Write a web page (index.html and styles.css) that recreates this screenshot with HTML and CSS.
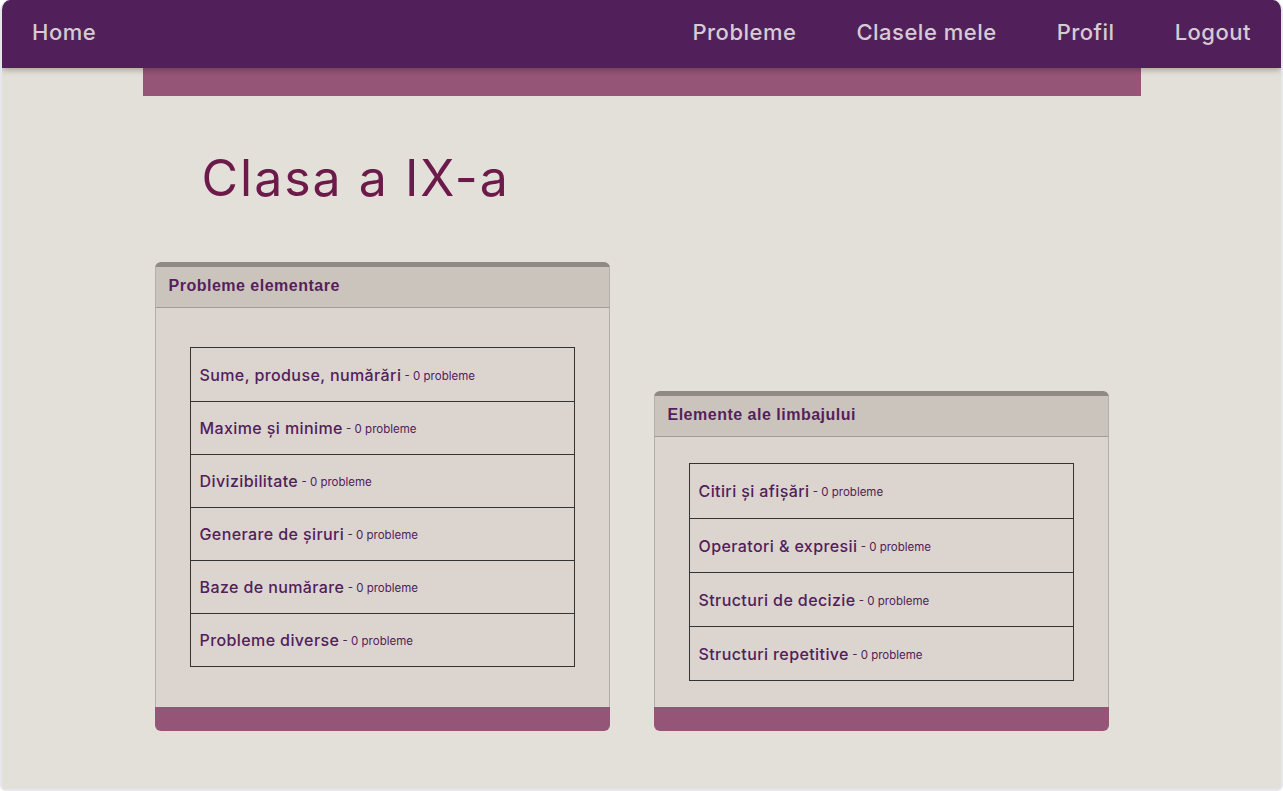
FILE: index.html
```html
<!DOCTYPE html>
<html lang="ro">
<head>
<meta charset="utf-8">
<title>Clasa a IX-a</title>
<link rel="stylesheet" href="styles.css">
</head>
<body>
<div class="page">
  <nav class="nav">
    <a class="nav-link" href="#">Home</a>
    <div class="nav-right">
      <a class="nav-link" href="#">Probleme</a>
      <a class="nav-link" href="#">Clasele mele</a>
      <a class="nav-link" href="#">Profil</a>
      <a class="nav-link" href="#">Logout</a>
    </div>
  </nav>
  <main class="content">
    <div class="band"></div>
    <h1 class="title">Clasa a IX-a</h1>
    <div class="cards">
      <section class="card">
        <header class="card-head">Probleme elementare</header>
        <div class="card-body card-body-a">
          <ul class="list">
            <li class="row"><span class="topic">Sume, produse, numărări</span><span class="count"> - 0 probleme</span></li>
            <li class="row"><span class="topic">Maxime și minime</span><span class="count"> - 0 probleme</span></li>
            <li class="row"><span class="topic">Divizibilitate</span><span class="count"> - 0 probleme</span></li>
            <li class="row"><span class="topic">Generare de șiruri</span><span class="count"> - 0 probleme</span></li>
            <li class="row"><span class="topic">Baze de numărare</span><span class="count"> - 0 probleme</span></li>
            <li class="row"><span class="topic">Probleme diverse</span><span class="count"> - 0 probleme</span></li>
          </ul>
        </div>
        <footer class="card-foot"></footer>
      </section>
      <section class="card">
        <header class="card-head">Elemente ale limbajului</header>
        <div class="card-body card-body-b">
          <ul class="list list-b">
            <li class="row"><span class="topic">Citiri și afișări</span><span class="count"> - 0 probleme</span></li>
            <li class="row"><span class="topic">Operatori &amp; expresii</span><span class="count"> - 0 probleme</span></li>
            <li class="row"><span class="topic">Structuri de decizie</span><span class="count"> - 0 probleme</span></li>
            <li class="row"><span class="topic">Structuri repetitive</span><span class="count"> - 0 probleme</span></li>
          </ul>
        </div>
        <footer class="card-foot"></footer>
      </section>
    </div>
  </main>
</div>
</body>
</html>
```

FILE: styles.css
```css
* { box-sizing: border-box; }
html, body { margin: 0; padding: 0; }
body {
  background: #ffffff;
  font-family: "Inter", "Noto Sans", sans-serif;
}
.page {
  width: 1283px;
  height: 791px;
  background: #e3dfd9;
  border: 2px solid #e6e6ec;
  border-top: none;
  border-radius: 10px 10px 6px 6px;
  overflow: hidden;
}
.nav {
  height: 68px;
  background: #51205a;
  display: flex;
  align-items: center;
  justify-content: space-between;
  box-shadow: 0 2px 6px rgba(0,0,0,0.28);
  position: relative;
  z-index: 1;
}
.nav-right { display: flex; }
.nav-link {
  color: #d6cbd3;
  text-decoration: none;
  font-size: 22px;
  font-weight: 500;
  letter-spacing: 0.5px;
  padding: 0 30px;
  line-height: 30px;
  margin-top: -4px;
}
.content {
  width: 998px;
  margin: 0 auto;
}
.band {
  height: 28px;
  background: #955577;
}
.title {
  margin: 51px 0 0 59px;
  font-size: 50px;
  line-height: 62px;
  font-weight: 400;
  color: #6b1a4a;
  letter-spacing: 2px;
}
.cards {
  display: flex;
  align-items: flex-end;
  gap: 44px;
  padding: 0 12px;
  margin-top: 53px;
}
.card {
  width: 455px;
  display: flex;
  flex-direction: column;
  border-top: 5px solid #8f8a86;
  border-radius: 6px;
  overflow: hidden;
  background: #dcd5cf;
}
.card-head {
  height: 41px;
  background: #cbc4bd;
  border-left: 1px solid #b5afaa;
  border-right: 1px solid #b5afaa;
  border-bottom: 1px solid #a29c97;
  padding: 0 13px 2px;
  display: flex;
  align-items: center;
  font-family: "Liberation Sans", Arial, sans-serif;
  font-weight: 700;
  font-size: 16px;
  color: #561f5c;
  letter-spacing: 0.5px;
}
.card-body {
  border-left: 1px solid #b5afaa;
  border-right: 1px solid #b5afaa;
  padding: 39px 34px 40px;
}
.card-body-b { padding: 26px 34px 26px; }
.card-foot {
  height: 24px;
  background: #955577;
}
.list {
  list-style: none;
  margin: 0;
  padding: 0;
  border: 1px solid #333333;
}
.row {
  height: 53px;
  display: flex;
  align-items: center;
  padding: 0 0 0 9px;
  border-top: 1px solid #333333;
  color: #51205a;
}
.row:first-child { border-top: none; }
.list-b .row { height: 54px; }
.topic {
  font-size: 16px;
  font-weight: 500;
  letter-spacing: 0.4px;
}
.count {
  font-size: 11.5px;
  white-space: pre;
  margin-top: 2px;
}
```
